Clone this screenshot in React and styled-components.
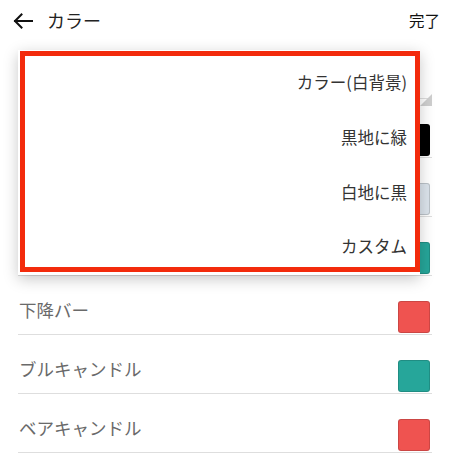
import React from 'react';
import styled, { createGlobalStyle } from 'styled-components';

const GlobalStyle = createGlobalStyle`
  html, body {
    margin: 0;
    padding: 0;
    background: #fff;
  }
  body {
    font-family: "Noto Sans CJK JP", "Noto Sans", sans-serif;
    overflow: hidden;
  }
`;

const rows = [
  { label: '背景', color: null },
  { label: '上昇バー', color: '#000000' },
  { label: '背景色', color: '#dce4ec' },
  { label: '上昇バー', color: '#26a69a' },
  { label: '下降バー', color: '#ef5350' },
  { label: 'ブルキャンドル', color: '#26a69a' },
  { label: 'ベアキャンドル', color: '#ef5350' },
];

const options = ['カラー(白背景)', '黒地に緑', '白地に黒', 'カスタム'];

function BackArrow() {
  return (
    <svg width="20" height="16" viewBox="0 0 20 16" fill="none">
      <path d="M19 8H2M8.5 1.5L2 8l6.5 6.5" stroke="#111" strokeWidth="2" strokeLinecap="square" />
    </svg>
  );
}

function App() {
  return (
    <Page>
      <GlobalStyle />
      <Header>
        <HeaderLeft>
          <BackArrow />
          <Title>カラー</Title>
        </HeaderLeft>
        <Done>完了</Done>
      </Header>
      <List>
        {rows.map((r, i) => (
          <Row key={i}>
            {r.color ? (
              <>
                <Label>{r.label}</Label>
                <Swatch $color={r.color} />
              </>
            ) : (
              <SelectCorner />
            )}
          </Row>
        ))}
      </List>
      <Menu>
        <Frame>
          {options.map((o) => (
            <Item key={o}>{o}</Item>
          ))}
        </Frame>
      </Menu>
    </Page>
  );
}

const Page = styled.div`
  position: relative;
  width: 450px;
  height: 453px;
  overflow: hidden;
`;

const Header = styled.div`
  display: flex;
  align-items: center;
  justify-content: space-between;
  height: 40px;
  padding: 0 10px 0 13px;
`;

const HeaderLeft = styled.div`
  display: flex;
  align-items: center;
  gap: 14px;
  svg {
    margin-top: 2px;
  }
`;

const Title = styled.span`
  font-size: 18px;
  color: #222;
`;

const Done = styled.span`
  font-size: 15.5px;
  color: #111;
`;

const List = styled.div`
  padding: 0 18px;
`;

const Row = styled.div`
  position: relative;
  display: flex;
  align-items: flex-end;
  justify-content: space-between;
  padding: 0 2px 1px 1px;
  box-sizing: border-box;
  height: 59px;
  border-bottom: 1px solid #dedede;
`;

const Label = styled.span`
  font-size: 17.5px;
  line-height: 24px;
  color: #6a6a6a;
  padding-bottom: 11px;
`;

const Swatch = styled.div`
  width: 32px;
  height: 32px;
  border-radius: 3px;
  box-sizing: border-box;
  background: ${(p) => p.$color};
  border: 1px solid rgba(0, 0, 0, 0.15);
`;

const SelectCorner = styled.div`
  position: absolute;
  right: 0;
  bottom: -8px;
  width: 0;
  height: 0;
  border-left: 12px solid transparent;
  border-bottom: 12px solid #cfcfcf;
`;

const Menu = styled.div`
  position: absolute;
  left: 18px;
  top: 50px;
  width: 402px;
  height: 225px;
  background: #fff;
  box-shadow: 0 4px 14px rgba(0, 0, 0, 0.22);
  padding: 1px 0 0 2px;
  box-sizing: border-box;
`;

const Frame = styled.div`
  height: 221px;
  box-sizing: border-box;
  border: 5px solid #f32b0c;
  padding-right: 8px;
`;

const Item = styled.div`
  display: flex;
  align-items: center;
  justify-content: flex-end;
  height: 55px;
  padding-bottom: 3px;
  box-sizing: border-box;
  font-size: 16.5px;
  color: #333;
  &:last-child {
    height: 50px;
    padding-bottom: 0;
    margin-top: 0;
  }
`;

export default App;
